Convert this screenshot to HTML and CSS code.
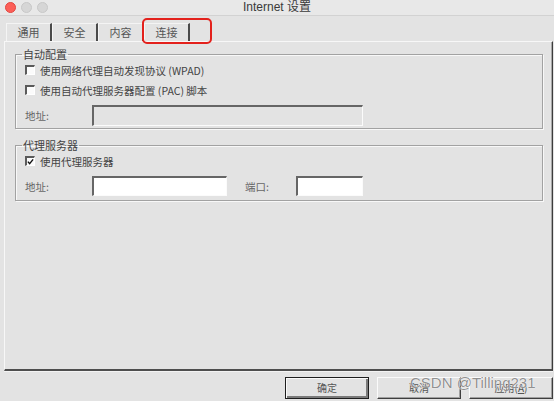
FILE: index.html
```html
<!DOCTYPE html>
<html lang="zh-CN">
<head>
<meta charset="utf-8">
<title>Internet 设置</title>
<link rel="stylesheet" href="styles.css">
</head>
<body>
<div class="window">
  <div class="titlebar">
    <div class="lights">
      <span class="light red"></span>
      <span class="light"></span>
      <span class="light"></span>
    </div>
    <div class="title">Internet 设置</div>
    <div></div>
  </div>

  <div class="tabs">
    <div class="tab">通用</div>
    <div class="tab">安全</div>
    <div class="tab">内容</div>
    <div class="tab active">连接</div>
    <div class="highlight"></div>
  </div>

  <div class="panel">
    <fieldset class="group g1">
      <legend>自动配置</legend>
      <div class="row">
        <span class="check"></span>
        <span class="label">使用网络代理自动发现协议 (WPAD)</span>
      </div>
      <div class="row">
        <span class="check"></span>
        <span class="label">使用自动代理服务器配置 (PAC) 脚本</span>
      </div>
      <div class="row field-row tall">
        <span class="flabel">地址:</span>
        <span class="input disabled wide"></span>
      </div>
    </fieldset>

    <fieldset class="group g2">
      <legend>代理服务器</legend>
      <div class="row">
        <span class="check checked">
          <svg viewBox="0 0 8 8" width="8" height="8"><path d="M1 3.6 L3 6 L7 1" fill="none" stroke="#111" stroke-width="1.6"/></svg>
        </span>
        <span class="label">使用代理服务器</span>
      </div>
      <div class="row field-row">
        <span class="flabel">地址:</span>
        <span class="input addr"></span>
        <span class="flabel port">端口:</span>
        <span class="input portbox"></span>
      </div>
    </fieldset>
  </div>

  <div class="buttons">
    <div class="btn default">确定</div>
    <div class="btn">取消</div>
    <div class="btn">应用(<u>A</u>)</div>
  </div>

  <div class="watermark">CSDN @Tilling231</div>
</div>
</body>
</html>
```

FILE: styles.css
```css
* { box-sizing: border-box; }

html, body {
  margin: 0;
  padding: 0;
}

body {
  width: 554px;
  height: 401px;
  overflow: hidden;
  background: #e3e3e3;
  font-family: "Noto Sans CJK SC", "Liberation Sans", sans-serif;
  color: #444;
}

.window {
  position: relative;
  width: 554px;
  height: 401px;
}

/* title bar */
.titlebar {
  height: 16px;
  display: grid;
  grid-template-columns: 1fr auto 1fr;
  align-items: center;
  background: #e8e8e8;
  border-bottom: 1px solid #d2d2d2;
}

.lights {
  display: flex;
  gap: 5px;
  padding-left: 5px;
  align-items: center;
}

.light {
  width: 11px;
  height: 11px;
  border-radius: 50%;
  background: #d6d6d6;
  border: 1px solid #c8c8c8;
}

.light.red {
  background: #fc5f58;
  border-color: #e2463f;
}

.title {
  font-family: "Liberation Sans", "Noto Sans CJK SC", sans-serif;
  font-size: 12px;
  line-height: 15px;
  color: #3a3a3a;
}

/* tabs */
.tabs {
  position: relative;
  display: flex;
  margin-top: 7px;
  padding-left: 6px;
  height: 18px;
}

.tab {
  width: 46px;
  height: 18px;
  border-top: 1px solid #f4f4f4;
  border-left: 1px solid #f4f4f4;
  border-right: 2px solid #4a4a4a;
  font-size: 11px;
  line-height: 16px;
  text-align: center;
  color: #555;
}

.highlight {
  position: absolute;
  left: 142px;
  top: -5px;
  width: 70px;
  height: 26px;
  border: 2px solid #e3211c;
  border-radius: 5px;
}

/* panel */
.panel {
  margin-left: 4px;
  width: 549px;
  height: 330px;
  border-top: 1px solid #f7f7f7;
  border-left: 1px solid #f7f7f7;
  border-right: 1px solid #3c3c3c;
  border-bottom: 2px solid #4e4e4e;
  box-shadow: inset -1px 0 0 #a8a8a8, 0 1px 0 #f3f3f3;
  padding: 6px 9px 0 10px;
}

.group {
  margin: 0;
  padding: 0 0 0 9px;
  min-width: 0;
  border: 1px solid #a2a2a2;
  box-shadow: inset 1px 1px 0 #f8f8f8, 1px 1px 0 #f8f8f8;
}

.group legend {
  margin-left: -3px;
  padding: 0 1px;
  font-size: 11px;
  line-height: 12px;
  color: #444;
}

.g1 { padding-bottom: 2px; }

.g2 {
  margin-top: 10px;
  padding-bottom: 4px;
}

.row {
  display: flex;
  align-items: center;
  height: 20px;
  font-size: 10.5px;
}

.field-row {
  margin-top: 5px;
}

.field-row.tall { height: 21px; }

.check {
  width: 10px;
  height: 10px;
  margin-right: 5px;
  background: #fbfbfb;
  border-top: 2px solid #5a5a5a;
  border-left: 2px solid #5a5a5a;
  border-right: 1px solid #ffffff;
  border-bottom: 1px solid #ffffff;
  display: flex;
  align-items: center;
  justify-content: center;
}

.check svg { display: block; }

.label { color: #444; }

.flabel {
  width: 67px;
  color: #666;
}

.flabel.port {
  width: 51px;
  margin-left: 18px;
}

.input {
  height: 100%;
  border-top: 2px solid #666;
  border-left: 2px solid #666;
  border-right: 1px solid #fbfbfb;
  border-bottom: 1px solid #fbfbfb;
  background: #fff;
}

.input.disabled { background: transparent; }
.input.wide { width: 271px; }
.input.addr { width: 135px; }
.input.portbox { width: 67px; }

/* buttons */
.buttons {
  display: flex;
  gap: 8px;
  margin-top: 6px;
  padding-left: 285px;
}

.btn {
  width: 84px;
  height: 22px;
  font-size: 10px;
  line-height: 19px;
  text-align: center;
  color: #555;
  background: #e3e3e3;
  border-top: 1px solid #fafafa;
  border-left: 1px solid #fafafa;
  border-right: 1px solid #3e3e3e;
  border-bottom: 1px solid #3e3e3e;
  box-shadow: inset -1px -1px 0 #a0a0a0;
}

.btn.default {
  border: 1px solid #1e1e1e;
  box-shadow: inset 1px 1px 0 #fafafa, inset -2px -2px 0 #7a7a7a;
}

.btn u { text-decoration: underline; }

.watermark {
  position: absolute;
  left: 410px;
  top: 374px;
  font-family: "Liberation Sans", sans-serif;
  font-size: 15px;
  line-height: 18px;
  color: rgba(115, 115, 115, 0.8);
  text-shadow: 0 0 1px #fff, 0 0 1px #fff;
  white-space: nowrap;
}
```
